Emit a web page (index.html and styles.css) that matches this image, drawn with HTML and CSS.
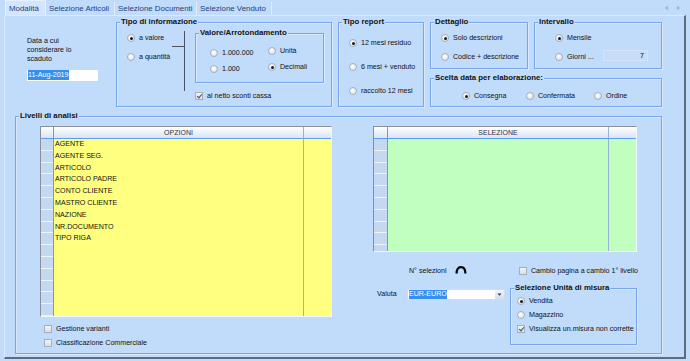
FILE: index.html
```html
<!DOCTYPE html>
<html>

<head>
  <meta charset="utf-8">
  <title>Modalità</title>
  <link rel="stylesheet" href="styles.css">
</head>

<body>
  <div class="tabbar">
    <div class="tab active">Modalità</div>
    <div class="tab">Selezione Articoli</div>
    <div class="tab">Selezione Documenti</div>
    <div class="tab">Selezione Venduto</div>
    <div class="arrows">
      <svg width="5" height="6" viewBox="0 0 5 6"><path d="M4 0.5 L0.8 3 L4 5.5 Z" fill="#aab4c2"/></svg>
      <svg width="5" height="6" viewBox="0 0 5 6"><path d="M1 0.5 L4.2 3 L1 5.5 Z" fill="#aab4c2"/></svg>
    </div>
  </div>

  <div class="page">
    <div class="top">
      <div class="date-block">
        <div class="date-label">Data a cui<br>considerare lo<br>scaduto</div>
        <div class="textbox date-box"><span class="sel">11-Aug-2019</span></div>
      </div>

      <div class="group g-info">
        <span class="group-title">Tipo di informazione</span>
        <div class="info-body">
          <div class="radio-col info-radios">
            <div class="radio on"><i></i>a valore</div>
            <div class="radio"><i></i>a quantità</div>
          </div>
          <div class="bracket"></div>
          <div class="info-right">
            <div class="group g-valore">
              <span class="group-title">Valore/Arrotondamento</span>
              <div class="valore-body">
                <div class="radio-col col-a">
                  <div class="radio"><i></i>1.000.000</div>
                  <div class="radio"><i></i>1.000</div>
                </div>
                <div class="radio-col col-b">
                  <div class="radio"><i></i>Unità</div>
                  <div class="radio on"><i></i>Decimali</div>
                </div>
              </div>
            </div>
            <div class="check on netto"><i></i>al netto sconti cassa</div>
          </div>
        </div>
      </div>

      <div class="group g-report">
        <span class="group-title">Tipo report</span>
        <div class="radio-col">
          <div class="radio on"><i></i>12 mesi residuo</div>
          <div class="radio"><i></i>6 mesi + venduto</div>
          <div class="radio"><i></i>raccolto 12 mesi</div>
        </div>
      </div>

      <div class="right-col">
        <div class="right-row">
          <div class="group g-dett">
            <span class="group-title">Dettaglio</span>
            <div class="radio-col">
              <div class="radio on"><i></i>Solo descrizioni</div>
              <div class="radio"><i></i>Codice + descrizione</div>
            </div>
          </div>
          <div class="group g-interv">
            <span class="group-title">Intervallo</span>
            <div class="radio-col">
              <div class="radio on"><i></i>Mensile</div>
              <div class="giorni-row">
                <div class="radio giorni"><i></i>Giorni ...</div>
                <div class="num-box">7</div>
              </div>
            </div>
          </div>
        </div>
        <div class="group g-scelta">
          <span class="group-title">Scelta data per elaborazione:</span>
          <div class="scelta-row">
            <div class="radio on w64"><i></i>Consegna</div>
            <div class="radio w68"><i></i>Confermata</div>
            <div class="radio"><i></i>Ordine</div>
          </div>
        </div>
      </div>
    </div>

    <div class="group livelli">
      <span class="group-title">Livelli di analisi</span>
      <div class="lv-body">
        <div class="lv-left">
          <div class="grid grid-left">
            <div class="gh rh"></div>
            <div class="gh col-main">OPZIONI</div>
            <div class="gh"></div>
            <div class="rowhead rh"></div>
            <div class="col-main">
              <div class="row">AGENTE</div>
              <div class="row">AGENTE SEG.</div>
              <div class="row">ARTICOLO</div>
              <div class="row">ARTICOLO PADRE</div>
              <div class="row">CONTO CLIENTE</div>
              <div class="row">MASTRO CLIENTE</div>
              <div class="row">NAZIONE</div>
              <div class="row">NR.DOCUMENTO</div>
              <div class="row">TIPO RIGA</div>
            </div>
            <div></div>
          </div>
          <div class="lv-checks">
            <div class="check"><i></i>Gestione varianti</div>
            <div class="check"><i></i>Classificazione Commerciale</div>
          </div>
        </div>

        <div class="lv-right">
          <div class="grid grid-right">
            <div class="gh rh"></div>
            <div class="gh col-main">SELEZIONE</div>
            <div class="gh"></div>
            <div class="rowhead rh"></div>
            <div class="col-main"></div>
            <div></div>
          </div>
          <div class="sel-bottom">
            <div class="sel-count">
              N° selezioni
              <svg class="arc" width="12" height="8" viewBox="0 0 12 8"><path d="M1.6 7.6 Q1.6 1.2 6 1.2 Q10.4 1.2 10.4 7.6" fill="none" stroke="#000" stroke-width="2.2"/></svg>
            </div>
            <div class="cambio">
              <div class="check"><i></i>Cambio pagina a cambio 1° livello</div>
            </div>
            <div class="valuta">
              <span class="valuta-label">Valuta</span>
              <div class="combo">
                <span class="sel">EUR-EURO</span>
                <span class="combo-btn"><svg width="5" height="3" viewBox="0 0 5 3"><path d="M0.5 0.5 L4.5 0.5 L2.5 2.8 Z" fill="#333"/></svg></span>
              </div>
            </div>
            <div class="group g-unita">
              <span class="group-title">Selezione Unità di misura</span>
              <div class="radio-col">
                <div class="radio on"><i></i>Vendita</div>
                <div class="radio"><i></i>Magazzino</div>
                <div class="check on"><i></i>Visualizza un.misura non corrette</div>
              </div>
            </div>
          </div>
        </div>
      </div>
    </div>
  </div>
</body>

</html>
```

FILE: styles.css
```css
* {
  box-sizing: border-box;
}

body {
  margin: 0;
  width: 690px;
  height: 361px;
  overflow: hidden;
  background-color: #c1dbfb;
  font-family: "Liberation Sans", Arial, sans-serif;
  font-size: 7.1px;
  color: #111;
}

/* linguette */
.tabbar {
  display: flex;
  align-items: flex-end;
  height: 15px;
  padding-left: 5px;
}

.tab {
  height: 13px;
  line-height: 13px;
  padding-left: 3px;
  font-size: 7.9px;
  color: #23417a;
  border-right: 1px solid #e0ecfb;
  white-space: nowrap;
  overflow: hidden;
}

.tab:nth-child(1) { width: 41px; }
.tab:nth-child(2) { width: 69px; }
.tab:nth-child(3) { width: 82px; }
.tab:nth-child(4) { width: 75px; }

.tab.active {
  height: 15px;
  line-height: 16px;
  background-color: #d3e6fd;
  border: 1px solid #e6f0fe;
  border-bottom: none;
}

.arrows {
  display: flex;
  gap: 7px;
  margin-left: auto;
  margin-right: 9px;
  align-self: center;
}

.page {
  margin-left: 4px;
  width: 682px;
  height: 344px;
  border-left: 1px solid #dbe9fc;
  border-top: 1px solid #dbe9fc;
  border-right: 2px solid #5f6b79;
  border-bottom: 2px solid #5f6b79;
}

/* riquadri */
.group {
  position: relative;
  border: 1px solid #78a6ee;
  box-shadow: inset 1px 1px 0 #d9e8fd, 1px 1px 0 #d9e8fd;
}

.group-title {
  position: absolute;
  top: -6px;
  left: 3px;
  padding: 0 1px;
  line-height: 10px;
  font-size: 7.8px;
  font-weight: bold;
  color: #111;
  background-color: #c1dbfb;
  white-space: nowrap;
}

/* radio e check */
.radio,
.check {
  display: flex;
  align-items: center;
  height: 8px;
  white-space: nowrap;
}

.radio i,
.check i {
  position: relative;
  flex: none;
  width: 8px;
  height: 8px;
  margin-right: 4px;
  border: 1px solid #a5afbc;
}

.radio i {
  border-radius: 50%;
  background: radial-gradient(circle at 40% 35%, #ffffff, #d6dce5);
}

.radio.on i::after {
  content: "";
  position: absolute;
  left: 1.5px;
  top: 1.5px;
  width: 3px;
  height: 3px;
  border-radius: 50%;
  background-color: #1a1a1a;
}

.check i {
  background: linear-gradient(#f3f5f8, #d9dee5);
}

.check.on i::after {
  content: "";
  position: absolute;
  left: 2px;
  top: 0;
  width: 2px;
  height: 4px;
  border: solid #4a4f57;
  border-width: 0 1.2px 1.2px 0;
  transform: rotate(40deg);
}

.radio-col {
  display: flex;
  flex-direction: column;
}

/* parte alta */
.top {
  display: flex;
  align-items: flex-start;
  margin-top: 6px;
  height: 85px;
}

.date-block {
  margin-left: 22px;
  width: 72px;
  padding-top: 15px;
}

.date-label {
  line-height: 9px;
}

.textbox {
  background-color: #ffffff;
}

.date-box {
  margin-top: 6px;
  width: 71px;
  height: 11px;
  line-height: 11px;
  padding-left: 1px;
}

.sel {
  display: inline-block;
  background-color: #3390f0;
  color: #ffffff;
  line-height: 10px;
}

.g-info {
  margin-left: 17px;
  width: 216px;
  height: 85px;
}

.info-body {
  display: flex;
  align-items: flex-start;
}

.info-radios {
  width: 55px;
  padding-left: 10px;
  padding-top: 11px;
  gap: 11px;
}

.bracket {
  position: relative;
  width: 13px;
  height: 60px;
  margin-top: 8px;
  border-right: 1px solid #4b5361;
}

.bracket::before {
  content: "";
  position: absolute;
  left: 0;
  top: 15px;
  width: 12px;
  height: 1px;
  background-color: #4b5361;
}

.info-right {
  margin-left: 10px;
  padding-top: 10px;
}

.g-valore {
  width: 129px;
  height: 50px;
}

.valore-body {
  display: flex;
}

.col-a {
  width: 72px;
  padding-left: 14px;
  padding-top: 15px;
  gap: 8px;
}

.col-b {
  padding-top: 13px;
  gap: 8px;
}

.netto {
  margin-top: 9px;
}

.g-report {
  margin-left: 6px;
  width: 86px;
  height: 85px;
}

.g-report .radio-col {
  padding-left: 10px;
  padding-top: 16px;
  gap: 16px;
}

.right-col {
  margin-left: 6px;
  width: 232px;
}

.right-row {
  display: flex;
  height: 47px;
}

.g-dett {
  width: 98px;
}

.g-dett .radio-col {
  padding-left: 10px;
  padding-top: 11px;
  gap: 11px;
}

.g-interv {
  margin-left: 6px;
  width: 128px;
}

.g-interv .radio-col {
  padding-left: 20px;
  padding-top: 11px;
  gap: 11px;
}

.giorni-row {
  display: flex;
  align-items: flex-start;
  height: 8px;
}

.giorni {
  width: 48px;
}

.num-box {
  width: 45px;
  height: 11px;
  margin-top: -3px;
  line-height: 11px;
  padding-right: 3px;
  text-align: right;
  background-color: #c6dcf9;
  border: 1px solid #d5e4f8;
}

.g-scelta {
  margin-top: 9px;
  width: 232px;
  height: 29px;
}

.scelta-row {
  display: flex;
  padding-left: 31px;
  padding-top: 13px;
}

.w64 { width: 64px; }
.w68 { width: 68px; }

/* livelli di analisi */
.livelli {
  margin-left: 10px;
  margin-top: 9px;
  width: 647px;
  height: 238px;
}

.lv-body {
  display: flex;
  align-items: flex-start;
}

.lv-left {
  margin-left: 24px;
  padding-top: 9px;
  width: 292px;
}

.lv-right {
  margin-left: 41px;
  padding-top: 9px;
  width: 264px;
}

.grid {
  display: grid;
  grid-template-rows: 12px 1fr;
  border: 1px solid;
  border-color: #8a9099 #f2f7fd #f2f7fd #8a9099;
}

.grid-left {
  grid-template-columns: 13px 250px 1fr;
  height: 191px;
  background-color: #ffff80;
}

.grid-right {
  grid-template-columns: 14px 221px 1fr;
  height: 126px;
  background-color: #c0ffc0;
}

.gh {
  background: linear-gradient(#ffffff, #d8e4f5);
  border-bottom: 1px solid #5c9df0;
  text-align: center;
  line-height: 11px;
  font-size: 7px;
  color: #333;
}

.rh {
  border-right: 1px solid #5aa0f2;
}

.col-main {
  border-right: 1px solid #97b3d8;
}

.rowhead {
  background: repeating-linear-gradient(to bottom, #c5d8f2 0, #c5d8f2 10.8px, #eef4fd 10.8px, #eef4fd 11.8px);
}

.row {
  height: 11.8px;
  line-height: 11.8px;
  padding-left: 1px;
  white-space: nowrap;
}

.lv-checks {
  display: flex;
  flex-direction: column;
  gap: 6px;
  margin-top: 8px;
  padding-left: 4px;
}

.sel-bottom {
  display: grid;
  grid-template-columns: 137px 127px;
  row-gap: 11px;
  margin-top: 12px;
}

.sel-count {
  display: flex;
  align-items: center;
  height: 13px;
  padding-left: 36px;
}

.arc {
  margin-left: 8px;
  margin-top: -2px;
}

.cambio {
  display: flex;
  align-items: center;
  padding-left: 9px;
}

.valuta {
  display: flex;
  align-items: flex-start;
  padding-top: 1px;
  padding-left: 4px;
}

.valuta-label {
  width: 30px;
  line-height: 11px;
}

.combo {
  display: flex;
  align-items: center;
  width: 98px;
  height: 11px;
  padding-left: 1px;
  background-color: #ffffff;
  border: 1px solid #d0ddef;
}

.combo .sel {
  line-height: 9px;
}

.combo-btn {
  display: flex;
  align-items: center;
  justify-content: center;
  margin-left: auto;
  width: 9px;
  height: 9px;
  background: linear-gradient(#eef3fa, #d3deed);
}

.g-unita {
  width: 127px;
  height: 57px;
}

.g-unita .radio-col {
  padding-left: 6px;
  padding-top: 8px;
  gap: 6px;
}
```
